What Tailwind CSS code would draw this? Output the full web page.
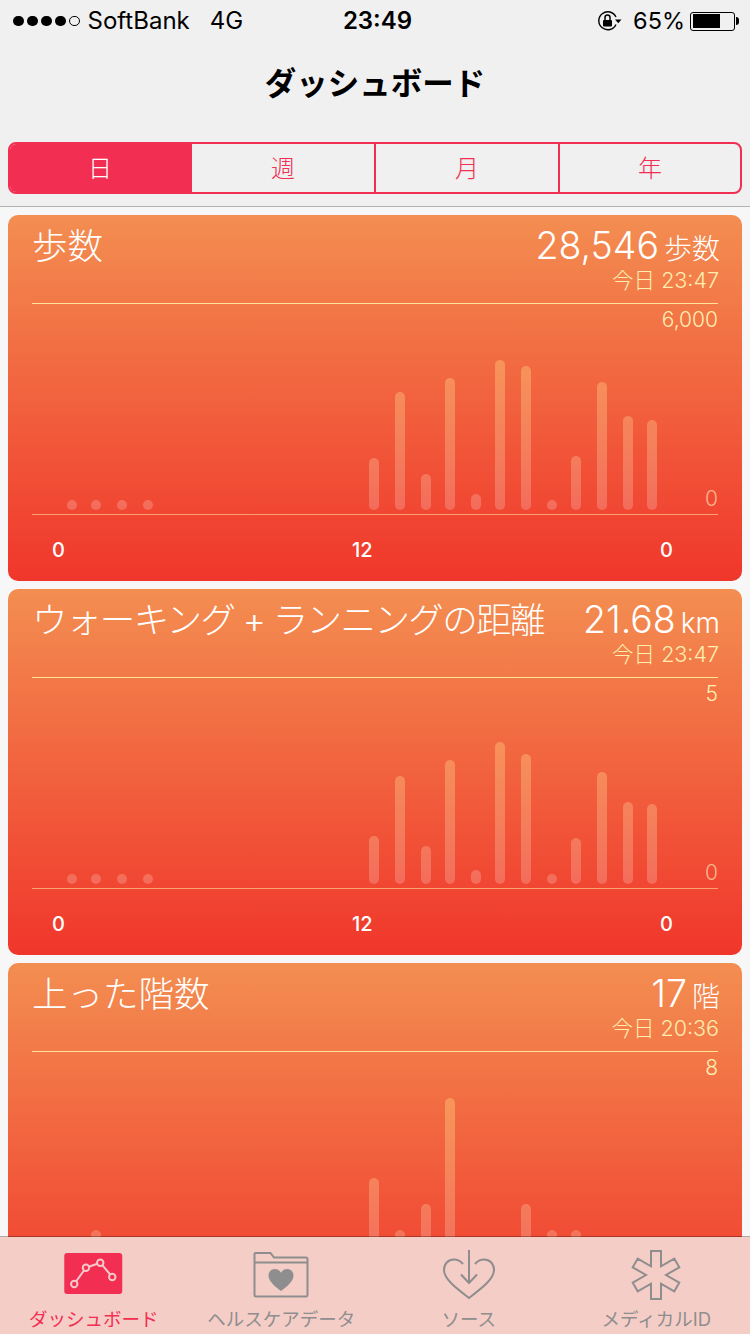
<!DOCTYPE html>
<html lang="ja">
<head>
  <meta charset="UTF-8" />
  <meta name="viewport" content="width=device-width, initial-scale=1" />
  <title>ダッシュボード</title>
  <script src="https://cdn.jsdelivr.net/npm/@tailwindcss/browser@4"></script>
</head>
<body class="bg-[#f7f7f7] font-['Inter','Noto_Sans_CJK_JP',sans-serif]">
  <div class="relative w-[750px] h-[1334px] overflow-hidden">

    <header class="bg-[#f0f0f0] h-[207px] border-b border-[#b2b2b2]">
      <!-- Status bar -->
      <div class="flex items-center h-[42px] pl-[13px] pr-[11px] text-[24px] text-black">
        <div class="flex-1 flex items-center">
          <div class="flex gap-[3.500px]">
            <span class="w-[10.500px] h-[10.500px] rounded-full bg-black"></span>
            <span class="w-[10.500px] h-[10.500px] rounded-full bg-black"></span>
            <span class="w-[10.500px] h-[10.500px] rounded-full bg-black"></span>
            <span class="w-[10.500px] h-[10.500px] rounded-full bg-black"></span>
            <span class="w-[10.500px] h-[10.500px] rounded-full border border-black"></span>
          </div>
          <span class="ml-[8px]">SoftBank</span>
          <span class="ml-[20px]">4G</span>
        </div>
        <div class="font-semibold ml-[3px]">23:49</div>
        <div class="flex-1 flex items-center justify-end">
          <svg width="24" height="20" viewBox="0 0 24 20" fill="none" class="mr-[11px]">
            <path d="M18 13.500A9 9 0 1 1 18 6" stroke="#000" stroke-width="1.400" />
            <path d="M17 8.500h6.500l-3.250 3.800z" fill="#000" />
            <rect x="5" y="9" width="9" height="6.500" rx="1" fill="#000" />
            <path d="M7 9V6.500a2.500 2.500 0 0 1 5 0V9" stroke="#000" stroke-width="1.500" />
          </svg>
          <span class="text-[23.500px]">65%</span>
          <div class="ml-[5px] w-[45px] h-[19px] border border-black rounded-[3px] p-[1.500px]">
            <div class="w-[27px] h-full bg-black"></div>
          </div>
          <div class="ml-[1px] w-[3px] h-[8px] bg-black rounded-r-full"></div>
        </div>
      </div>

      <h1 class="text-center text-[31.500px] leading-[40px] font-bold text-black mt-[22px]">ダッシュボード</h1>

      <!-- Segmented control -->
      <div class="flex mx-[8px] mt-[38px] h-[52px] border-2 border-[#f22e53] rounded-[8px] overflow-hidden text-[24px] font-light text-[#f22e53]">
        <div class="w-[180px] flex items-center justify-center pt-[1px] bg-[#f22e53] text-white">日</div>
        <div class="w-[184px] flex items-center justify-center pt-[1px] border-l-2 border-[#f22e53]">週</div>
        <div class="w-[184px] flex items-center justify-center pt-[1px] border-l-2 border-[#f22e53]">月</div>
        <div class="flex-1 flex items-center justify-center pt-[1px] border-l-2 border-[#f22e53]">年</div>
      </div>
    </header>

    <main id="cards" class="flex flex-col gap-[8px] pt-[8px] px-[8px]"></main>

    <!-- Tab bar -->
    <nav class="absolute left-0 right-0 bottom-0 h-[98px] grid grid-cols-4 border-t border-black/30 bg-clip-padding bg-[#f5cdc7] text-[18.500px] text-[#8e8e8e]">
      <div class="flex flex-col items-center text-[#f22e53]">
        <svg width="60" height="44" viewBox="0.750 0 60 44" class="mt-[15px]">
          <rect x="1" y="1" width="58" height="41" rx="3" fill="#f22e53" />
          <path d="M11 32 22.700 15.700M22.700 15.700 37 10.700M37 10.700 49 25" stroke="#f8c8c8" stroke-width="2" />
          <circle cx="11" cy="32" r="3.200" fill="#f22e53" stroke="#f8c8c8" stroke-width="2" />
          <circle cx="22.700" cy="15.700" r="3.200" fill="#f22e53" stroke="#f8c8c8" stroke-width="2" />
          <circle cx="37" cy="10.700" r="3.200" fill="#f22e53" stroke="#f8c8c8" stroke-width="2" />
          <circle cx="49" cy="25" r="3.200" fill="#f22e53" stroke="#f8c8c8" stroke-width="2" />
        </svg>
        <span class="mt-[11px] leading-[24px]">ダッシュボード</span>
      </div>
      <div class="flex flex-col items-center">
        <svg width="56" height="47" viewBox="0 0 56 47" fill="none" class="mt-[14px]">
          <path d="M1.500 11V3a1 1 0 0 1 1-1h15l3.500 4.500h32a1.500 1.500 0 0 1 1.500 1.500v36a1.500 1.500 0 0 1-1.500 1.500h-50a1.500 1.500 0 0 1-1.500-1.500z" stroke="#8e8e8e" stroke-width="2" />
          <path d="M1 11.500h54" stroke="#8e8e8e" stroke-width="2" />
          <path d="M28 40c-6-4.500-12.500-9.500-12.500-15.500 0-4 3-6.500 6.300-6.500 2.700 0 5 1.500 6.200 3.700 1.200-2.200 3.500-3.700 6.200-3.700 3.300 0 6.300 2.500 6.300 6.500 0 6-6.500 11-12.500 15.500z" fill="#8e8e8e" />
        </svg>
        <span class="mt-[9px] leading-[24px]">ヘルスケアデータ</span>
      </div>
      <div class="flex flex-col items-center">
        <svg width="56" height="52" viewBox="0 0 56 52" fill="none" class="mt-[12px]">
          <path d="M22 15c-2.500-3-6-4.500-9-4.500C7 10.500 3 15 3 21c0 9 12 18 25 28 13-10 25-19 25-28 0-6-4-10.500-10-10.500-3 0-6.500 1.500-9 4.500" stroke="#8e8e8e" stroke-width="2" />
          <path d="M28 1v33M20 25.500l8 8.500 8-8.500" stroke="#8e8e8e" stroke-width="2" />
        </svg>
        <span class="mt-[6px] leading-[24px]">ソース</span>
      </div>
      <div class="flex flex-col items-center">
        <svg width="52" height="52" viewBox="-26 -26 52 52" fill="none" class="mt-[12px]">
          <path d="M-5-24H5V-8.660L18.280-16.330 23.280-7.670 10 0 23.280 7.670 18.280 16.330 5 8.660V24H-5V8.660L-18.280 16.330-23.280 7.670-10 0-23.280-7.670-18.280-16.330-5-8.660z" stroke="#8e8e8e" stroke-width="2" />
        </svg>
        <span class="mt-[6px] leading-[24px]">メディカルID</span>
      </div>
    </nav>
  </div>

  <script>
    const hours = [72, 96, 122, 148, 374, 400, 426, 450, 476, 500, 526, 552, 576, 602, 628, 652];

    const cards = [
      {
        title: '歩数', titleClass: '', value: '28,546', unit: '歩数', time: '今日 23:47', max: '6,000',
        heights: [10, 10, 10, 10, 52, 118, 36, 132, 16, 150, 144, 10, 54, 128, 94, 90]
      },
      {
        title: 'ウォーキング + ランニングの距離', titleClass: 'tracking-[-1.600px]', value: '21.68', unit: 'km', time: '今日 23:47', max: '5',
        heights: [10, 10, 10, 10, 48, 108, 38, 124, 14, 142, 130, 10, 46, 112, 82, 80]
      },
      {
        title: '上った階数', titleClass: '', value: '17', unit: '階', time: '今日 20:36', max: '8',
        heights: [0, 28, 0, 0, 80, 28, 54, 160, 0, 0, 54, 28, 28, 0, 0, 0]
      }
    ];

    function renderBars(heights) {
      let prev = 32;
      return heights.map((h, i) => {
        const left = hours[i] - 5 - prev;
        prev = hours[i] + 5;
        return `<div class="w-[10px] shrink-0 rounded-full bg-linear-to-t/srgb from-white/20 to-[#ffd27a]/40 bg-size-[100%_160px] bg-bottom bg-no-repeat" style="height:${h}px;margin-left:${left}px"></div>`;
      }).join('');
    }

    document.getElementById('cards').innerHTML = cards.map(card => `
      <section class="h-[366px] shrink-0 rounded-[10px] px-[24px] bg-linear-to-b/srgb from-[#f38e51] to-[#f0362b] text-white">
        <div class="h-[89px] flex justify-between border-b border-[#ffe39a]">
          <div class="text-[35.500px] leading-[44px] pt-[10px] font-light ${card.titleClass}">${card.title}</div>
          <div class="text-right">
            <div class="flex items-baseline justify-end h-[52px] pt-[5px] leading-[52px] -mr-[2px]">
              <span class="text-[37.500px] font-light">${card.value}</span>
              <span class="text-[28px] font-light ml-[5px]">${card.unit}</span>
            </div>
            <div class="text-[21.500px] leading-[26px] text-[#ffeeb0] font-light -mr-[1px]">${card.time}</div>
          </div>
        </div>
        <div class="h-[211px] flex border-b border-[#f8a070]">
          <div class="flex-1 flex items-end pb-[4px] overflow-hidden">${renderBars(card.heights)}</div>
          <div class="flex flex-col justify-between items-end text-[21px] leading-[24px] text-[#ffeeb0] font-light pt-[4px] pb-[3px]">
            <span>${card.max}</span>
            <span class="text-[#fbb48c]">0</span>
          </div>
        </div>
        <div class="relative h-[40px] flex justify-between pl-[20px] pr-[45px] pt-[21px] text-[20px] leading-[28px] font-medium">
          <span>0</span><span class="absolute left-[320px]">12</span><span>0</span>
        </div>
      </section>`).join('');
  </script>
</body>
</html>
